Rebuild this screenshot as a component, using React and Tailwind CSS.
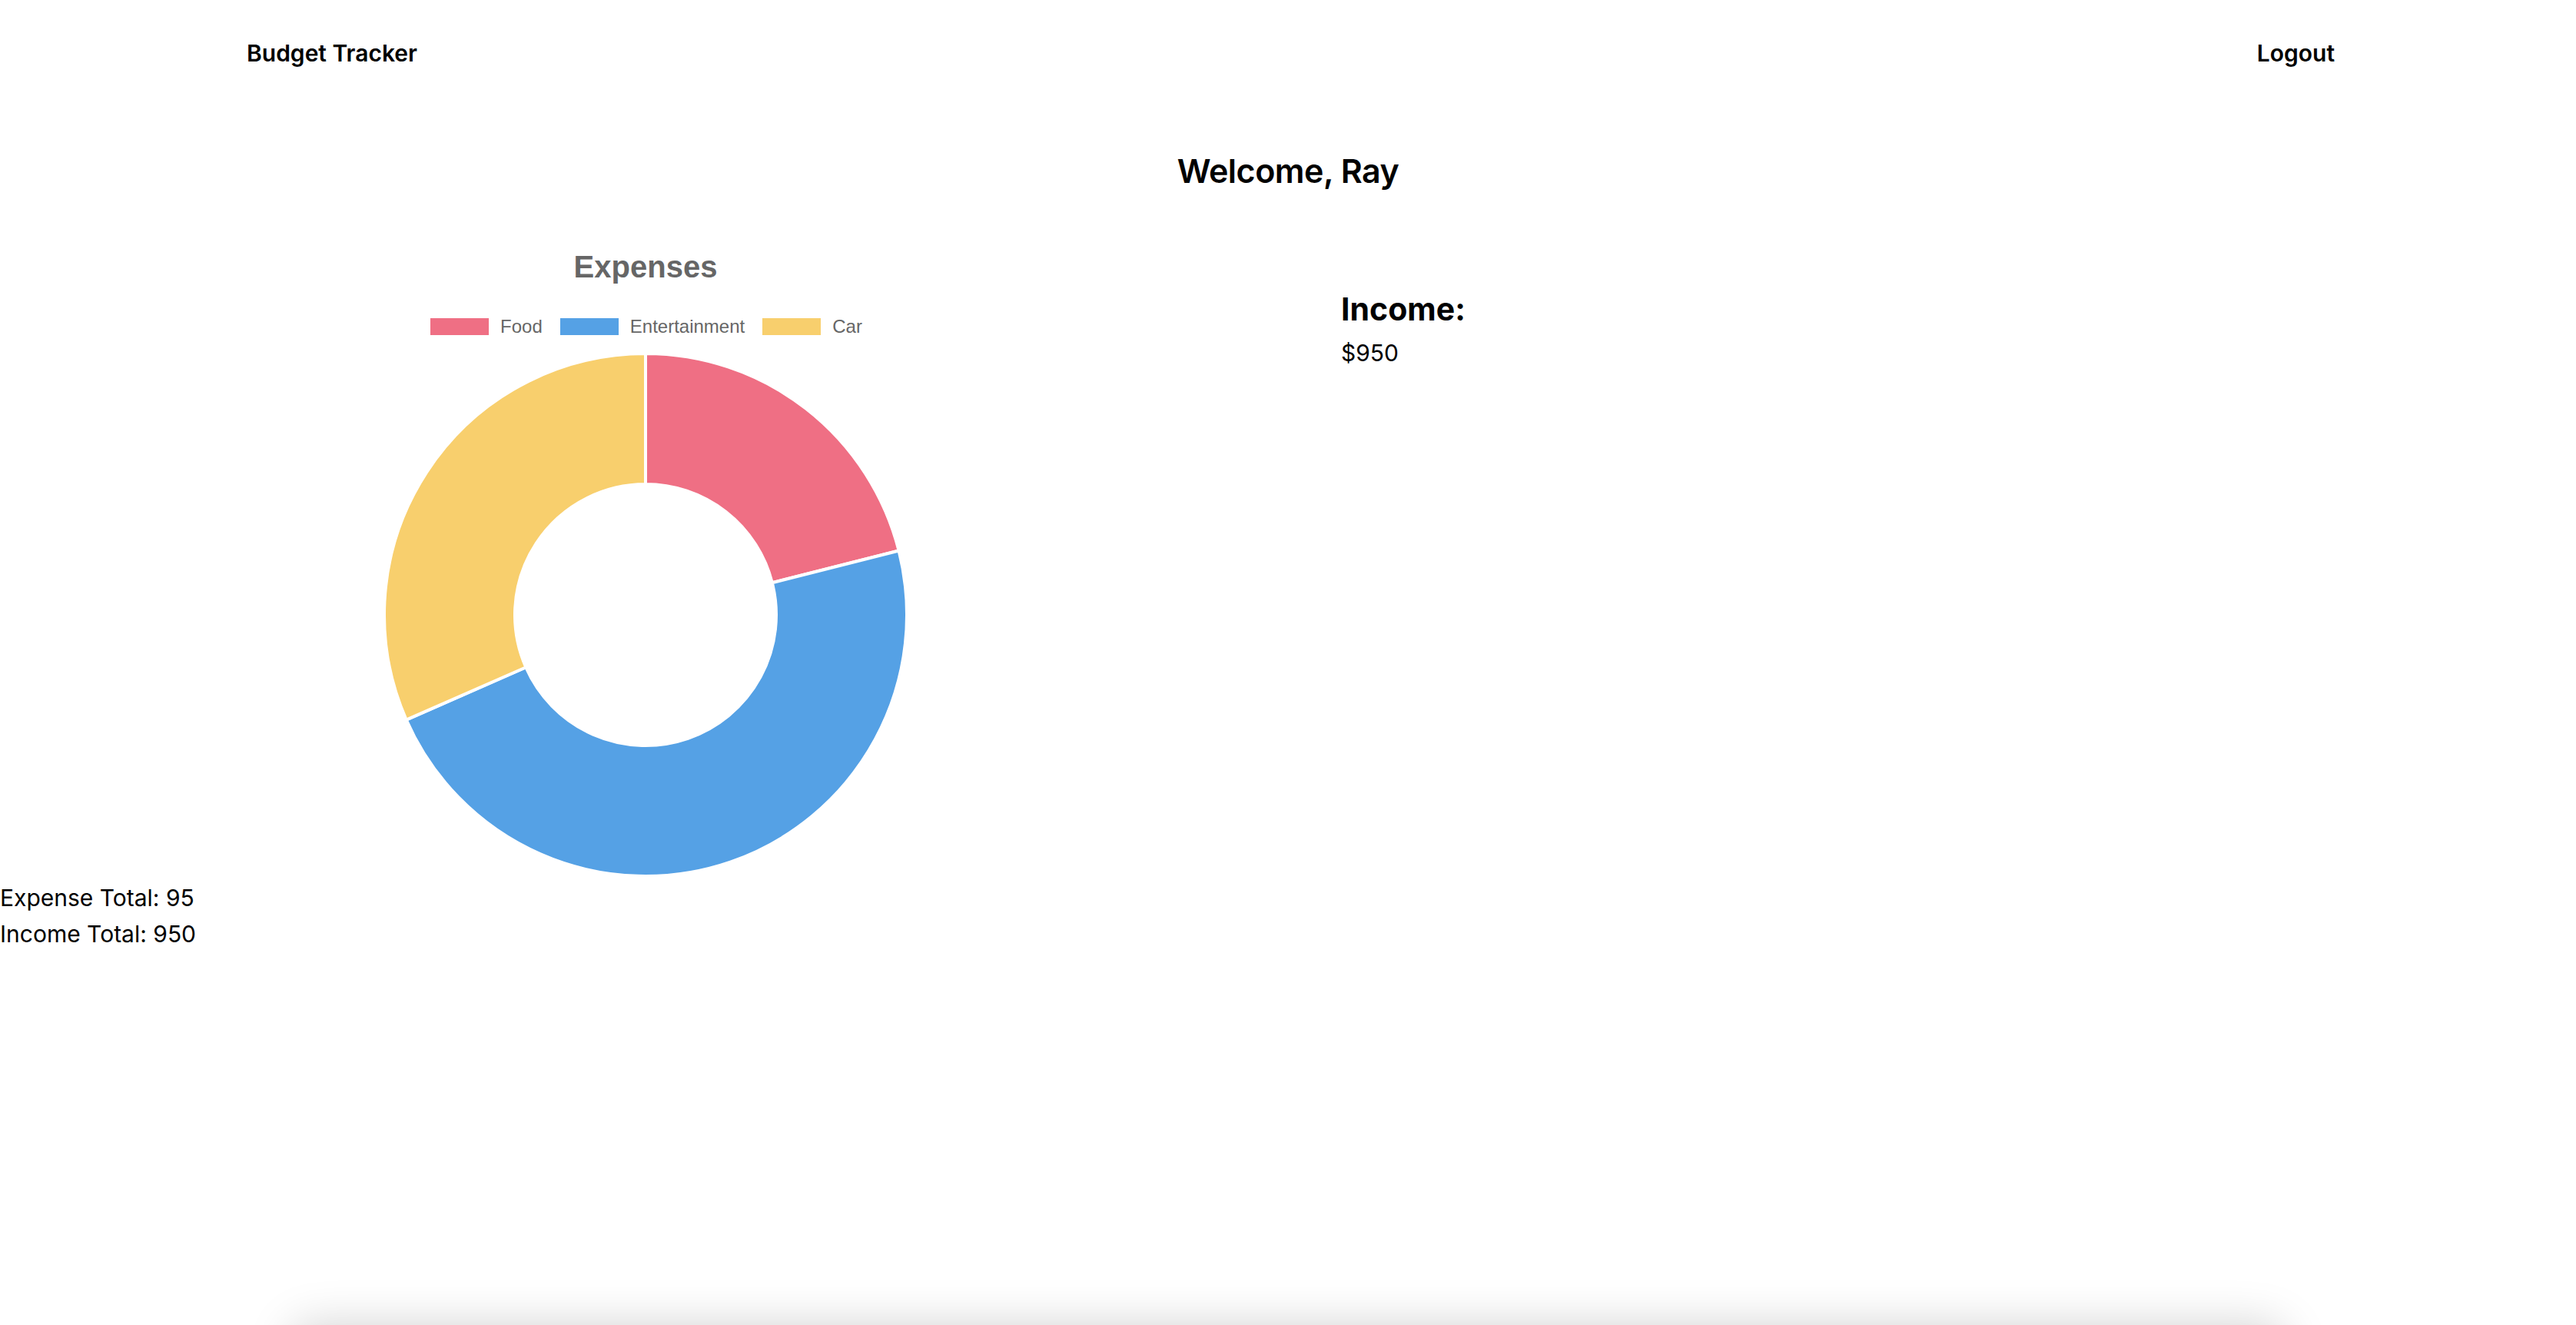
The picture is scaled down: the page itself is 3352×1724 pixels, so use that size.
import React from 'react';

const expenses = [
  { label: 'Food', amount: 20, color: '#EF6F84' },
  { label: 'Entertainment', amount: 45, color: '#55A1E5' },
  { label: 'Car', amount: 30, color: '#F8CF6D' },
];

function point(cx, cy, r, deg) {
  const a = (deg * Math.PI) / 180;
  return [cx + r * Math.sin(a), cy - r * Math.cos(a)];
}

function arcPath(cx, cy, R, r, start, end) {
  const large = end - start > 180 ? 1 : 0;
  const [x1, y1] = point(cx, cy, R, start);
  const [x2, y2] = point(cx, cy, R, end);
  const [x3, y3] = point(cx, cy, r, end);
  const [x4, y4] = point(cx, cy, r, start);
  return `M${x1} ${y1} A${R} ${R} 0 ${large} 1 ${x2} ${y2} L${x3} ${y3} A${r} ${r} 0 ${large} 0 ${x4} ${y4} Z`;
}

function Donut() {
  const total = expenses.reduce((s, e) => s + e.amount, 0);
  let angle = 0;
  return (
    <svg width="690" height="690" viewBox="0 0 690 690">
      {expenses.map(e => {
        const start = angle;
        angle += (e.amount / total) * 360;
        return (
          <path
            key={e.label}
            d={arcPath(345, 345, 340, 170, start, angle)}
            fill={e.color}
            stroke="#fff"
            strokeWidth="4"
            strokeLinejoin="bevel"
          />
        );
      })}
    </svg>
  );
}

export default function App() {
  return (
    <div className="h-[1724px] overflow-hidden flex flex-col bg-white text-black font-['Inter',sans-serif]">
      <div className="h-[1724px] shrink-0">
        <nav className="h-[138px] flex items-center justify-between pl-[321px] pr-[314px]">
          <span className="text-[30px] font-semibold">Budget Tracker</span>
          <span className="text-[30px] font-semibold">Logout</span>
        </nav>

        <h2 className="mt-[56px] text-center text-[43px] leading-[57.6px] font-semibold tracking-[-0.5px]">Welcome, Ray</h2>

        <div className="flex">
          <div className="w-[1680px] flex flex-col items-center">
            <div className="mt-[71px] text-[40px] leading-[48px] font-bold text-[#666] font-['Liberation_Sans',sans-serif]">Expenses</div>
            <div className="mt-[42px] pl-[2px] flex items-center gap-[23px] h-[24px] text-[24px] leading-[24px] text-[#666] font-['Liberation_Sans',sans-serif]">
              {expenses.map(e => (
                <div key={e.label} className="flex items-center gap-[15px]">
                  <span className="w-[76px] h-[22px]" style={{ backgroundColor: e.color }} />
                  <span>{e.label}</span>
                </div>
              ))}
            </div>
            <div className="mt-[18px]">
              <Donut />
            </div>
          </div>
          <div className="pl-[65px] mt-[126px]">
            <h3 className="text-[41px] leading-[48px] font-bold">Income:</h3>
            <p className="mt-[11px] text-[30px] leading-[45px]">$950</p>
          </div>
        </div>

        <div className="text-[30px] leading-[47px]">
          <p>Expense Total: 95</p>
          <p>Income Total: 950</p>
        </div>
      </div>

      <div className="shrink-0 w-[2592px] h-[400px] mx-auto bg-white rounded-[24px] shadow-[0_0_60px_rgba(0,0,0,0.18)]" />
    </div>
  );
}
